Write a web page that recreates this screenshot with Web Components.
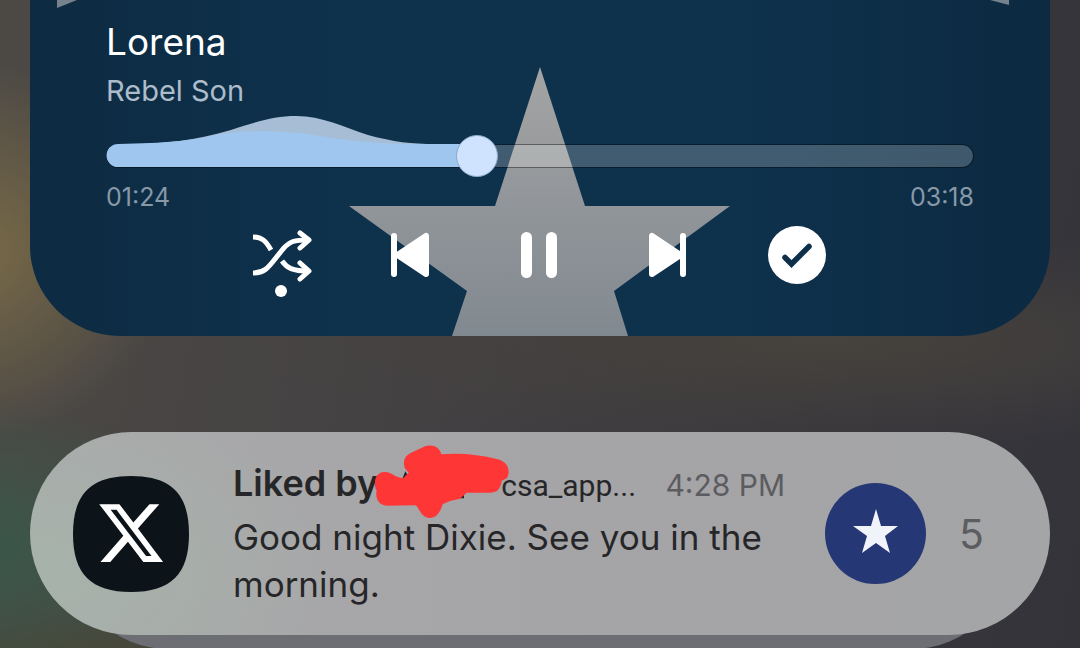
<!DOCTYPE html>
<html lang="en">
<head>
<meta charset="utf-8">
<meta name="viewport" content="width=device-width, initial-scale=1">
<title>Notifications</title>
<style>
html { height: 100%; }
body {
  margin: 0; min-height: 100%; overflow: hidden;
  font-family: Inter, "Noto Sans", sans-serif;
  background:
    radial-gradient(ellipse 200px 190px at -30px 250px, #7a6b48 0%, #7a6b4800 100%),
    radial-gradient(ellipse 240px 150px at -20px 550px, #3a584a 0%, #3a584a00 100%),
    radial-gradient(ellipse 200px 100px at 60px 680px, #4a4430 0%, #4a443000 100%),
    radial-gradient(ellipse 600px 110px at 820px 340px, #46423d 0%, #46423d00 100%),
    linear-gradient(100deg, #4c4945 0%, #434043 45%, #38373c 75%, #34333a 100%);
}
</style>
</head>
<body>
<notification-shade>
  <media-player song="Lorena" artist="Rebel Son" elapsed="84" duration="198"></media-player>
  <notification-card count="5">
    <app-icon slot="icon"></app-icon>
    <span slot="title">Liked by</span>
    <span slot="account">csa_app...</span>
    <time slot="time" datetime="16:28">4:28 PM</time>
    Good night Dixie. See you in the morning.
    <star-avatar slot="avatar"></star-avatar>
  </notification-card>
</notification-shade>

<script>
class Base extends HTMLElement {
  render(html) {
    this.attachShadow({ mode: 'open' }).innerHTML = html;
  }
}

customElements.define('notification-shade', class extends Base {
  connectedCallback() {
    this.render(`
      <style>
        :host { display: flex; flex-direction: column; gap: 96px; padding: 0 30px; }
      </style>
      <slot></slot>`);
  }
});

customElements.define('seek-bar', class extends Base {
  connectedCallback() {
    const max = this.getAttribute('max'), value = this.getAttribute('value');
    this.render(`
      <style>
        :host { display: grid; height: 42px; align-items: center; }
        .track, svg, input { grid-area: 1 / 1; }
        .track { height: 22px; border: 1px solid #0006; border-radius: 12px; background: #ffffff36 padding-box; }
        svg { width: 100%; height: 42px; overflow: visible; display: block; }
        input { appearance: none; -webkit-appearance: none; margin: 0; width: 100%; height: 42px; background: none; }
        input::-webkit-slider-runnable-track { height: 42px; background: none; }
        input::-webkit-slider-thumb {
          -webkit-appearance: none; box-sizing: border-box; width: 42px; height: 42px;
          border-radius: 50%; background: #cfe3fe; border: 1px solid #8fa9c8;
        }
      </style>
      <div class="track"></div>
      <svg viewBox="0 0 868 42" preserveAspectRatio="none" aria-hidden="true">
        <path fill="#a7bdd5" d="M12 10C60 9 90 5 125-5C150-13 168-19 190-19C216-19 238-8 262 0C288 7 305 9 330 9V22H12Z"/>
        <path fill="#9fc6ee" d="M12 9C60 8 85 6 115-1C132-4 160-5 195-2C225 3 260 9 310 9H370V32H12A11.5 11.5 0 0 1 12 9Z"/>
      </svg>
      <input type="range" aria-label="Playback position" min="0" max="${max}" value="${value}">`);
  }
});

const icons = {
  shuffle: `<g fill="none" stroke="currentColor" stroke-width="5" stroke-linejoin="round">
      <path d="M3 14C12 14 16 18 21 27M3 50C14 50 18 45 25 36L33 26C40 18 44 17 59 17M32 38C37 45 42 48 59 48"/>
      <path stroke-linecap="round" d="M50 10l9 7-9 8M50 40l9 8-9 8"/></g>
      <circle cx="31" cy="68" r="6" fill="currentColor"/>`,
  previous: `<g fill="currentColor" stroke="currentColor" stroke-linejoin="round">
      <rect x="12" y="10" width="6" height="44" rx="3" stroke="none"/>
      <path stroke-width="6" d="M47 13V51L20 33V31Z"/></g>`,
  pause: `<g fill="currentColor"><rect x="13" y="9" width="11" height="46" rx="5.5"/><rect x="38" y="9" width="11" height="46" rx="5.5"/></g>`,
  next: `<g fill="currentColor" stroke="currentColor" stroke-linejoin="round">
      <rect x="43" y="10" width="6" height="44" rx="3" stroke="none"/>
      <path stroke-width="6" d="M15 13V51L42 33V31Z"/></g>`,
  check: `<circle cx="31" cy="32" r="29" fill="currentColor"/>
      <path d="M19 34.5L25.5 41L43 23.500" fill="none" stroke="#0e2f49" stroke-width="5.5" stroke-linecap="round"/>`
};

customElements.define('player-button', class extends Base {
  connectedCallback() {
    this.render(`
      <style>
        :host { display: block; }
        button { display: block; padding: 0; border: 0; background: none; color: #fff; }
        svg { display: block; width: 64px; height: 64px; overflow: visible; }
      </style>
      <button type="button" aria-label="${this.getAttribute('label')}">
        <svg viewBox="0 0 64 64">${icons[this.getAttribute('icon')]}</svg>
      </button>`);
  }
});

customElements.define('media-player', class extends Base {
  connectedCallback() {
    const get = n => this.getAttribute(n);
    const clock = s => String(Math.floor(s / 60)).padStart(2, '0') + ':' + String(s % 60).padStart(2, '0');
    this.render(`
      <style>
        :host {
          display: block; position: relative; overflow: hidden; padding: 18px 76px 49px;
          border-radius: 0 0 90px 90px; color: #fff;
          background: linear-gradient(90deg, #0d2b42, #0e314c 30%, #0e314c 70%, #0c2a41);
        }
        .art { position: absolute; inset: 0; width: 100%; height: 100%; }
        .content { position: relative; }
        h1, p { margin: 0; font-weight: 400; white-space: nowrap; }
        h1 { font-size: 37px; line-height: 48px; }
        p { font-size: 29px; line-height: 40px; margin: 5px 0 24px; color: #adbccb; }
        .times { display: flex; justify-content: space-between; margin-top: 4px;
          font-size: 25px; line-height: 32px; color: #8798a8; }
        .controls { display: flex; justify-content: center; gap: 65px; margin-top: 10px; }
      </style>
      <svg class="art" viewBox="0 0 1020 336" preserveAspectRatio="xMidYMin slice" aria-hidden="true">
        <defs><linearGradient id="g" x2="0" y2="1">
          <stop stop-color="#a4a4a4"/><stop offset=".5" stop-color="#92969a"/><stop offset="1" stop-color="#818990"/>
        </linearGradient></defs>
        <path fill="url(#g)" d="M510 67L555 206H700L584 291L598 336H422L437 291L319 206H465Z"/>
        <path fill="#77838c" d="M27 0V8L47 0ZM960 0L979 5V0Z"/>
      </svg>
      <div class="content">
        <h1>${get('song')}</h1>
        <p>${get('artist')}</p>
        <seek-bar max="${get('duration')}" value="${get('elapsed')}"></seek-bar>
        <div class="times"><span>${clock(+get('elapsed'))}</span><span>${clock(+get('duration'))}</span></div>
        <div class="controls">
          <player-button icon="shuffle" label="Shuffle"></player-button>
          <player-button icon="previous" label="Previous"></player-button>
          <player-button icon="pause" label="Pause"></player-button>
          <player-button icon="next" label="Next"></player-button>
          <player-button icon="check" label="Saved"></player-button>
        </div>
      </div>`);
  }
});

customElements.define('app-icon', class extends Base {
  connectedCallback() {
    this.render(`
      <style>:host, svg { display: block; width: 116px; height: 116px; }</style>
      <svg viewBox="0 0 116 116" role="img" aria-label="X">
        <path fill="#0d1419" d="M58 0C98 0 116 18 116 58S98 116 58 116 0 98 0 58 18 0 58 0Z"/>
        <path fill="#fff" transform="translate(22.5 21.500) scale(2.96)" d="M18.244 2.25h3.308l-7.227 8.26 8.502 11.24H16.17l-5.214-6.817L4.99 21.75H1.68l7.73-8.835L1.254 2.25H8.08l4.713 6.231zm-1.161 17.52h1.833L7.084 4.126H5.117z"/>
      </svg>`);
  }
});

customElements.define('star-avatar', class extends Base {
  connectedCallback() {
    this.render(`
      <style>:host, svg { display: block; width: 101px; height: 101px; }</style>
      <svg viewBox="0 0 101 101" role="img" aria-label="Profile picture">
        <circle cx="50.5" cy="50.500" r="50.5" fill="#263776"/>
        <path fill="#f1f3fa" d="M51 26L56 43H73L60 53L65 70L51 60L37 70L42 53L28 43H46Z"/>
      </svg>`);
  }
});

customElements.define('scribble-mark', class extends Base {
  connectedCallback() {
    this.render(`
      <style>
        :host { display: block; position: relative; width: 123px; height: 48px; }
        svg { position: absolute; left: -3px; top: -16px; width: 135px; height: 75px; }
      </style>
      <svg viewBox="45 40 405 225" aria-hidden="true">
        <path fill="#252527" d="M128 142L136 122L150 145ZM300 188H312V203H300Z"/>
        <path fill="#ff3636" d="M72 124C95 122 105 142 130 142L146 126L134 112C128 92 134 76 152 67L195 47C220 40 238 50 244 71C300 66 360 72 410 85C445 92 452 120 441 142L425 150C422 175 410 186 390 186L320 186L300 204L270 211L248 221C240 245 230 262 208 262C185 260 180 238 168 224L80 225C55 225 45 200 50 180C38 160 45 125 72 124Z"/>
      </svg>`);
  }
});

customElements.define('notification-card', class extends Base {
  connectedCallback() {
    this.render(`
      <style>
        :host { display: block; position: relative; }
        .behind { position: absolute; inset: 8px 40px -14px 40px; border-radius: 98px; background: #6d6e73; }
        article {
          position: relative; box-sizing: border-box; min-height: 203px; border-radius: 102px;
          display: flex; align-items: center; padding: 0 68px 0 43px; color: #262628;
          background:
            radial-gradient(ellipse 320px 200px at 0 70%, #a6b3aa, #a6b3aa00),
            linear-gradient(90deg, #aaa9ab, #a5a4a7 50%, #a4a5a7);
        }
        .text { flex: 1; min-width: 0; margin: 0 40px 0 44px; }
        header { display: flex; align-items: baseline; line-height: 48px; white-space: nowrap; }
        scribble-mark { align-self: center; }
        h2 { margin: 0; font-size: 36px; font-weight: 600; line-height: 48px; }
        .account { font: 30px/44px Roboto, sans-serif; }
        .time { margin-left: auto; font-size: 30px; line-height: 44px; color: #5c5c60; }
        p { margin: 6px 0 0; font-size: 35px; line-height: 47px; }
        .count { width: 23px; margin-left: 33px; font-size: 41px; line-height: 48px; color: #5c5d61; }
      </style>
      <div class="behind"></div>
      <article>
        <slot name="icon"></slot>
        <div class="text">
          <header>
            <h2><slot name="title"></slot></h2>
            <scribble-mark></scribble-mark>
            <span class="account"><slot name="account"></slot></span>
            <span class="time"><slot name="time"></slot></span>
          </header>
          <p><slot></slot></p>
        </div>
        <slot name="avatar"></slot>
        <span class="count">${this.getAttribute('count')}</span>
      </article>`);
  }
});
</script>
</body>
</html>
